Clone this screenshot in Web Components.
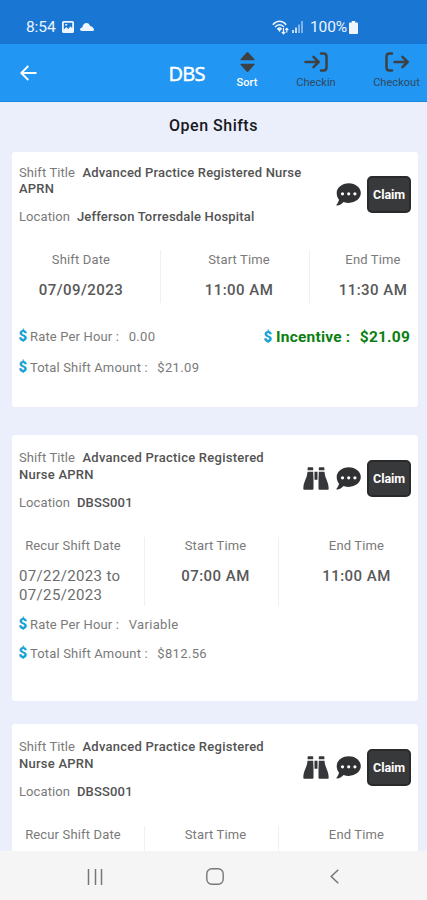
<!DOCTYPE html>
<html lang="en">
<head>
<meta charset="utf-8">
<title>Open Shifts</title>
<style>
html,body{margin:0;height:100%}
body{font-family:Roboto,"Liberation Sans",sans-serif;background:#ebeffb;overflow:hidden}
</style>
</head>
<body>
<shift-app></shift-app>
<script>
const define = (name, html, setup) => {
  const t = document.createElement('template');
  t.innerHTML = html;
  customElements.define(name, class extends HTMLElement {
    constructor() {
      super();
      this.attachShadow({mode: 'open'}).append(t.content.cloneNode(true));
    }
    connectedCallback() { if (setup) setup(this, this.shadowRoot); }
  });
};

const icons = {
  image: ['0 0 12 12', '<path fill="currentColor" fill-rule="evenodd" d="M1.5 0h9A1.5 1.5 0 0 1 12 1.500v9a1.500 1.500 0 0 1-1.500 1.500h-9A1.500 1.500 0 0 1 0 10.500v-9A1.500 1.500 0 0 1 1.500 0zM1.800 1.800v6.700L4.300 6l2 2 2.200-2.700 1.700 2V1.800zM3.200 3h2v1.600h-2z"/>'],
  cloud: ['0 0 14 8', '<path fill="currentColor" d="M2 8C.8 8 0 7.500 0 6.600 0 5.500 1 4.800 2.200 4.600 2.800 1.700 4.200 0 6.400 0c2 0 3.100 1.200 3.700 3C12.300 3.500 14 5 14 6.700 14 7.500 13.200 8 12 8z"/>'],
  wifi: ['0 0 17 15', '<g fill="none" stroke="currentColor" stroke-width="1.500"><path d="M.8 4.800C4.800.2 10.200.2 14.200 4.800M3 7c2.600-3 6.400-3 9 0M5.300 9.200c1.400-1.500 3-1.500 4.400 0"/><path d="M11.500 8v5.500M9.700 11.800l1.800 2 1.800-2M14.800 12.500V8.500M13.300 9.800l1.500-1.500 1.500 1.500" stroke-width="1.200"/></g><path fill="currentColor" d="M5.500 9h4l-2 3z"/>'],
  signal: ['0 0 11 12', '<g fill="currentColor" opacity=".8"><path d="M0 9h2v3H0zM3 6.500h2V12H3z"/><path opacity=".6" d="M6 3.500h2V12H6zM9 0h2v12H9z"/></g>'],
  battery: ['0 0 9 13', '<path fill="currentColor" d="M2.800 0h3.400v1.500H8q1 0 1 1V12q0 1-1 1H1q-1 0-1-1V2.500q0-1 1-1h1.800z"/>'],
  back: ['0 0 17 16', '<path d="M16.500 8H1.500M8.300 1L1.300 8l7 7" fill="none" stroke="currentColor" stroke-width="1.900"/>'],
  sort: ['0 0 16 20', '<path fill="currentColor" d="M1 8.200Q0 8.200.6 7.200L7 .5Q8 -.4 9 .5l6.400 6.700Q16 8.200 15 8.200zM1 11.800Q0 11.800.6 12.800L7 19.500q1 .9 2 0l6.400-6.700q.6-1-.4-1z"/>'],
  enter: ['0 0 24 20', '<g fill="none" stroke="currentColor" stroke-width="2.500" stroke-linecap="round" stroke-linejoin="round"><path d="M1.500 10H14M9.500 4.800L14.700 10l-5.200 5.200M17 1.500h2.500Q22.500 1.500 22.500 4.500v11q0 3-3 3H17"/></g>'],
  exit: ['0 0 24 20', '<g fill="none" stroke="currentColor" stroke-width="2.500" stroke-linecap="round" stroke-linejoin="round"><path d="M9.500 10h13M17.500 4.800L22.700 10l-5.200 5.200M7 1.500H4.500Q1.500 1.500 1.500 4.500v11q0 3 3 3H7"/></g>'],
  comment: ['0 0 25 23', '<path fill="#303133" d="M12.800.3C19.500.3 24.800 4.700 24.800 10.100S19.500 19.900 12.800 19.900c-1.800 0-3.600-.3-5.200-1C5.800 20.700 3.500 22.300.8 22.500c-.5 0-.6-.5-.3-.8 1.300-1.500 2.200-3.200 2.500-4.900C1.600 15 .7 12.700.7 10.100.7 4.700 6 .3 12.800.3z"/><g fill="#fff"><circle cx="6.500" cy="10.800" r="1.600"/><circle cx="12.700" cy="10.800" r="1.600"/><circle cx="18.900" cy="10.800" r="1.600"/></g>'],
  binoculars: ['0 0 26 23', '<g fill="#36373a"><path d="M5.300.3h4.200q.7 0 .7.700v2.300H4.600V1q0-.7.700-.7zM16.500.3h4.200q.7 0 .7.700v2.300h-5.600V1q0-.7.700-.7zM4.500 4.700h5.700l.3 8.300v8.700q0 1-1 1H1.300q-1 0-1-1C.5 14 4 12 4.500 4.700zM21.500 4.700h-5.700L15.500 13v8.700q0 1 1 1h8.200q1 0 1-1C25.500 14 22 12 21.500 4.700zM11.500 4.700h3v8h-3z"/></g>'],
  recents: ['0 0 16 16', '<path d="M1.500 0v16M8.500 0v16M14.500 0v16" stroke="#777" stroke-width="1.500"/>'],
  home: ['0 0 18 17', '<rect x=".8" y=".8" width="16.400" height="15.400" rx="5" fill="none" stroke="#777" stroke-width="1.400"/>'],
  prev: ['0 0 9 15', '<path d="M8.300.7L1.200 7.500l7.100 6.800" fill="none" stroke="#777" stroke-width="1.500"/>']
};
define('ui-icon', `<style>:host{display:block;flex:none}svg{display:block;width:100%;height:100%}</style>`, (el, root) => {
  const [box, body] = icons[el.getAttribute('name')];
  root.innerHTML += `<svg viewBox="${box}" preserveAspectRatio="none">${body}</svg>`;
});

define('status-bar', `<style>
:host{display:flex;align-items:center;height:44px;padding:10px 69px 0 26px;box-sizing:border-box;background:#1976d2;color:#eef5ff;font-size:15.500px;line-height:18px}
.t{width:36px;letter-spacing:-.1px;white-space:nowrap}.gap{flex:1}.p{margin-left:7px;width:39px;letter-spacing:-.1px}
</style><span class="t">8:54</span>
<ui-icon name="image" style="width:12px;height:12px"></ui-icon>
<ui-icon name="cloud" style="width:14px;height:8px;margin-left:6px"></ui-icon><span class="gap"></span>
<ui-icon name="wifi" style="width:17px;height:15px"></ui-icon>
<ui-icon name="signal" style="width:11px;height:12px;margin-left:3px"></ui-icon>
<span class="p">100%</span><ui-icon name="battery" style="width:9px;height:13px"></ui-icon>`);

define('tool-button', `<style>
:host{display:flex;flex-direction:column;align-items:center;color:#304a60;font-size:11px;line-height:13px;white-space:nowrap;letter-spacing:.05px}
</style><slot name="icon"></slot><slot></slot>`);

define('app-bar', `<style>
:host{display:grid;grid-template-columns:148px 67px 64px 74px 74px;height:58px;background:#2196f3;border-bottom:1px solid #1b87dc;box-sizing:border-box;color:#fff}
.back{padding:21px 0 0 20px}
.logo{font:400 20px/24px "Open Sans",sans-serif;letter-spacing:-.7px;padding:18px 0 0 20.500px;-webkit-text-stroke:.5px #fff}
tool-button{padding-top:8px}
tool-button ui-icon{margin-bottom:4px;color:#3d4144}
</style>
<div class="back"><ui-icon name="back" style="width:17px;height:16px"></ui-icon></div>
<div class="logo">DBS</div>
<tool-button style="color:#fff;font-weight:500"><ui-icon slot="icon" name="sort" style="width:15px;height:20px"></ui-icon>Sort</tool-button>
<tool-button><ui-icon slot="icon" name="enter" style="width:24px;height:20px"></ui-icon>Checkin</tool-button>
<tool-button style="padding-left:13px"><ui-icon slot="icon" name="exit" style="width:24px;height:20px"></ui-icon>Checkout</tool-button>`);

define('claim-button', `<style>
:host{display:grid;place-items:center;width:44px;height:37px;box-sizing:border-box;border:2px solid #292a2c;border-radius:5px;background:#38393b;color:#fff;font-weight:700;font-size:12.500px;letter-spacing:-.1px}
</style><slot></slot>`);

define('money-line', `<style>
:host{display:flex;align-items:center;height:18px;font-size:13px;white-space:nowrap;color:#7a7a7a;letter-spacing:.16px}
i{font:900 15px/18px Roboto,sans-serif;color:#18a3d7;width:var(--sign,11px);letter-spacing:0;position:relative;left:-.5px}
</style><i>$</i><slot></slot><slot name="value"></slot>`);

define('shift-time', `<style>
:host{display:block;text-align:center;box-sizing:border-box;color:#7a7a7a;font-size:13px;line-height:18px}
.v{color:#585858;font-size:15px;font-weight:500;line-height:19px;margin-top:12px;letter-spacing:.45px;white-space:nowrap}
.l{letter-spacing:.15px}
:host([range]) .v{font-weight:400;color:#6c6c6c;text-align:left;padding-left:7px;letter-spacing:.35px}
:host([divided]){border-right:1px solid #f0f0f0}
</style><div class="l"><slot name="label"></slot></div><div class="v"><slot></slot></div>`);

define('shift-card', `<style>
:host{display:block;box-sizing:border-box;background:#fff;border-radius:3px;margin:0 9px 0 12px;padding:0 7px;height:var(--h);flex:none;color:#7a7a7a;font-size:13px}
.head{display:flex;justify-content:space-between;height:var(--head)}
.info{padding-top:var(--top,13px);white-space:nowrap;line-height:var(--line);letter-spacing:.1px}
.loc{margin-top:var(--loc);line-height:18px}
b{font-weight:500;color:#535353}
.t b{margin-left:4px;letter-spacing:var(--ts)}
.t b:last-child{margin-left:0}
.loc b{margin-left:3.500px;letter-spacing:.17px}
.actions{display:flex;gap:6px;align-items:center;height:37px;margin-top:var(--at)}
.times{display:grid;grid-template-columns:var(--cols);height:var(--times);margin:0 -7px}
.money{margin-top:var(--mt);display:grid;row-gap:var(--mg);grid-template-columns:1fr auto}
</style>
<div class="head"><div class="info"><div class="t">Shift Title <b id="a"></b><br><b id="b"></b></div><div class="loc">Location <b id="c"></b></div></div>
<div class="actions"><slot name="actions"></slot></div></div>
<div class="times"><slot name="times"></slot></div>
<div class="money"><slot name="money"></slot></div>`, (el, root) => {
  const [a, b] = el.getAttribute('title-text').split('|');
  root.getElementById('a').textContent = a;
  root.getElementById('b').textContent = b;
  root.getElementById('c').textContent = el.getAttribute('location');
});

define('nav-bar', `<style>
:host{display:flex;align-items:center;height:49px;background:#f5f5f6;padding:2px 88px 0 87px;box-sizing:border-box;justify-content:space-between;flex:none}
ui-icon[name=home]{margin-right:3px}
</style><ui-icon name="recents" style="width:16px;height:16px"></ui-icon><ui-icon name="home" style="width:18px;height:17px"></ui-icon><ui-icon name="prev" style="width:9px;height:15px"></ui-icon>`);

const recurring = (range, start, end, money) => `<shift-card class="recurring" title-text="Advanced Practice Registered|Nurse APRN" location="DBSS001">
<ui-icon slot="actions" name="binoculars" style="width:26px;height:23px;margin-right:1px"></ui-icon>
<ui-icon slot="actions" name="comment" style="width:25px;height:23px"></ui-icon>
<claim-button slot="actions">Claim</claim-button>
<shift-time slot="times" divided range><span slot="label" style="margin-right:10px">Recur Shift Date</span>${range}</shift-time>
<shift-time slot="times" divided style="padding-left:8px"><span slot="label">Start Time</span>${start}</shift-time>
<shift-time slot="times" style="padding-left:16px"><span slot="label">End Time</span>${end}</shift-time>
${money}</shift-card>`;

define('shift-app', `<style>
:host{display:flex;flex-direction:column;height:900px;width:427px}
main{flex:1;min-height:0;overflow:hidden;display:flex;flex-direction:column;background:#ebeffb}
h1{margin:0;height:50px;box-sizing:border-box;padding:14px 0 0;text-align:center;font-size:16px;line-height:20px;font-weight:500;color:#18191d;letter-spacing:.5px;flex:none}
.single{--h:255px;--head:98px;--at:24px;--line:16px;--loc:11px;--ts:.19px;--cols:149px 149px 1fr;--times:53px;--mt:24px;--mg:13px;margin-bottom:28px}
.single shift-time{padding-top:1px}
.recurring{--h:266px;--head:102px;--at:25px;--line:16.500px;--loc:11px;--top:15px;--ts:.25px;--cols:133px 134px 1fr;--times:69px;--mt:9px;--mg:11px;margin-bottom:23px}
.inc{font-size:15.500px;font-weight:700;color:#0b7f10;letter-spacing:.2px}
[slot=value]{margin-left:9.500px;letter-spacing:.35px}
.inc[slot=value]{letter-spacing:.2px}
</style>
<status-bar></status-bar><app-bar></app-bar>
<main><h1>Open Shifts</h1>
<shift-card class="single" title-text="Advanced Practice Registered Nurse|APRN" location="Jefferson Torresdale Hospital">
<ui-icon slot="actions" name="comment" style="width:25px;height:23px"></ui-icon>
<claim-button slot="actions">Claim</claim-button>
<shift-time slot="times" divided style="padding-right:10px"><span slot="label">Shift Date</span>07/09/2023</shift-time>
<shift-time slot="times" divided style="padding-left:8px"><span slot="label">Start Time</span>11:00 AM</shift-time>
<shift-time slot="times" style="padding-left:18px"><span slot="label">End Time</span>11:30 AM</shift-time>
<money-line slot="money">Rate Per Hour :<span slot="value">0.00</span></money-line>
<money-line slot="money" style="--sign:12px;margin:1px 1px -1px 0"><span class="inc">Incentive :</span><span slot="value" class="inc">$21.09</span></money-line>
<money-line slot="money">Total Shift Amount :<span slot="value">$21.09</span></money-line>
</shift-card>${recurring('07/22/2023 to<br>07/25/2023', '07:00 AM', '11:00 AM', `
<money-line slot="money" style="grid-column:1/-1">Rate Per Hour :<span slot="value">Variable</span></money-line>
<money-line slot="money">Total Shift Amount :<span slot="value">$812.56</span></money-line>`)}${recurring('', '', '', '')}</main>
<nav-bar></nav-bar>`);
</script>
</body>
</html>
